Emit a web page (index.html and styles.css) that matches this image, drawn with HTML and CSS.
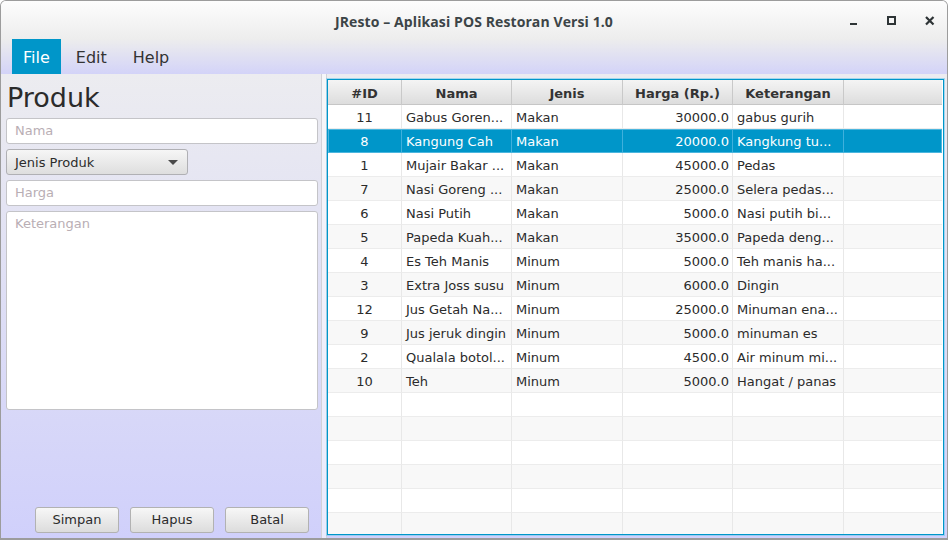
FILE: index.html
```html
<!DOCTYPE html>
<html>
<head>
<meta charset="utf-8">
<title>JResto</title>
<link rel="stylesheet" href="styles.css">
</head>
<body>
<div class="window">
  <div class="titlebar">
    <div class="title">JResto – Aplikasi POS Restoran Versi 1.0</div>
    <div class="controls">
      <svg class="ctl" width="12" height="12" viewBox="0 0 12 12"><rect x="2" y="8" width="7" height="2" fill="#2e3436"/></svg>
      <svg class="ctl" width="12" height="12" viewBox="0 0 12 12"><rect x="2" y="2" width="7" height="7" fill="none" stroke="#2e3436" stroke-width="2"/></svg>
      <svg class="ctl" width="12" height="12" viewBox="0 0 12 12"><path d="M2 2 L9.5 9.5 M9.5 2 L2 9.5" stroke="#2e3436" stroke-width="2.2"/></svg>
    </div>
  </div>
  <div class="menubar">
    <div class="menu active">File</div>
    <div class="menu">Edit</div>
    <div class="menu">Help</div>
  </div>
  <div class="main">
    <div class="left">
      <div class="heading">Produk</div>
      <div class="field"><span class="ph">Nama</span></div>
      <div class="combo"><span>Jenis Produk</span><span class="arrow"></span></div>
      <div class="field"><span class="ph">Harga</span></div>
      <div class="area"><span class="ph">Keterangan</span></div>
      <div class="spacer"></div>
      <div class="buttons">
        <div class="btn">Simpan</div>
        <div class="btn">Hapus</div>
        <div class="btn">Batal</div>
      </div>
    </div>
    <div class="divider"></div>
    <div class="right">
      <div class="tablebox">
        <table class="grid">
          <colgroup>
            <col class="c-id"><col class="c-nama"><col class="c-jenis"><col class="c-harga"><col class="c-ket"><col>
          </colgroup>
          <thead>
            <tr><th>#ID</th><th>Nama</th><th>Jenis</th><th>Harga (Rp.)</th><th>Keterangan</th><th class="fill"></th></tr>
          </thead>
          <tbody>
            <tr><td class="ctr">11</td><td>Gabus Goren...</td><td>Makan</td><td class="num">30000.0</td><td>gabus gurih</td><td></td></tr>
            <tr class="sel"><td class="ctr">8</td><td>Kangung Cah</td><td>Makan</td><td class="num">20000.0</td><td>Kangkung tu...</td><td></td></tr>
            <tr><td class="ctr">1</td><td>Mujair Bakar ...</td><td>Makan</td><td class="num">45000.0</td><td>Pedas</td><td></td></tr>
            <tr><td class="ctr">7</td><td>Nasi Goreng ...</td><td>Makan</td><td class="num">25000.0</td><td>Selera pedas...</td><td></td></tr>
            <tr><td class="ctr">6</td><td>Nasi Putih</td><td>Makan</td><td class="num">5000.0</td><td>Nasi putih bi...</td><td></td></tr>
            <tr><td class="ctr">5</td><td>Papeda Kuah...</td><td>Makan</td><td class="num">35000.0</td><td>Papeda deng...</td><td></td></tr>
            <tr><td class="ctr">4</td><td>Es Teh Manis</td><td>Minum</td><td class="num">5000.0</td><td>Teh manis ha...</td><td></td></tr>
            <tr><td class="ctr">3</td><td>Extra Joss susu</td><td>Minum</td><td class="num">6000.0</td><td>Dingin</td><td></td></tr>
            <tr><td class="ctr">12</td><td>Jus Getah Na...</td><td>Minum</td><td class="num">25000.0</td><td>Minuman ena...</td><td></td></tr>
            <tr><td class="ctr">9</td><td>Jus jeruk dingin</td><td>Minum</td><td class="num">5000.0</td><td>minuman es</td><td></td></tr>
            <tr><td class="ctr">2</td><td>Qualala botol...</td><td>Minum</td><td class="num">4500.0</td><td>Air minum mi...</td><td></td></tr>
            <tr><td class="ctr">10</td><td>Teh</td><td>Minum</td><td class="num">5000.0</td><td>Hangat / panas</td><td></td></tr>
            <tr><td></td><td></td><td></td><td></td><td></td><td></td></tr>
            <tr><td></td><td></td><td></td><td></td><td></td><td></td></tr>
            <tr><td></td><td></td><td></td><td></td><td></td><td></td></tr>
            <tr><td></td><td></td><td></td><td></td><td></td><td></td></tr>
            <tr><td></td><td></td><td></td><td></td><td></td><td></td></tr>
            <tr><td></td><td></td><td></td><td></td><td></td><td></td></tr>
          </tbody>
        </table>
      </div>
    </div>
  </div>
</div>
</body>
</html>
```

FILE: styles.css
```css
* { box-sizing: border-box; }
html, body { margin: 0; padding: 0; background: #ffffff; }
body { width: 949px; height: 540px; overflow: hidden; font-family: "DejaVu Sans", sans-serif; color: #2b2b2b; }

.window {
  width: 948px;
  height: 540px;
  border: 1px solid #9c9c9c;
  border-bottom-width: 2px;
  border-radius: 6px 6px 0 0;
  display: flex;
  flex-direction: column;
  overflow: hidden;
  background: #ececf0;
}

.titlebar {
  height: 38px;
  flex: none;
  background: linear-gradient(#fdfdfd, #ededed);
  display: flex;
  align-items: center;
  justify-content: center;
  position: relative;
}
.title {
  font-family: "Open Sans", "Noto Sans", sans-serif;
  font-weight: 700;
  font-size: 14px;
  color: #3c4447;
  letter-spacing: 0.1px;
  padding-top: 2px;
}
.controls {
  position: absolute;
  right: 11px;
  top: 14px;
  display: flex;
  gap: 26px;
}
.ctl { display: block; }

.menubar {
  height: 35px;
  flex: none;
  background: linear-gradient(#ededed, #d3d3f8);
  display: flex;
  padding-left: 11px;
  gap: 3px;
}
.menu {
  padding: 2px 11px 0;
  font-size: 16px;
  line-height: 33px;
  color: #333;
}
.menu.active { background: #0096c9; color: #ffffff; }
.menu + .menu { margin-left: 1px; }

.main {
  flex: 1;
  display: flex;
  background: linear-gradient(#ececf0, #d0d0fb);
  min-height: 0;
}

.left {
  width: 320px;
  flex: none;
  display: flex;
  flex-direction: column;
  padding: 8px 3px 5px 5px;
}
.heading {
  font-size: 27px;
  line-height: 32px;
  height: 32px;
  color: #2b2b2b;
  padding-left: 1px;
  margin-bottom: 4px;
}
.field, .area {
  height: 26px;
  background: #ffffff;
  border: 1px solid #c4c4c8;
  border-radius: 3px;
  padding: 0 8px;
  font-size: 13px;
  line-height: 24px;
  margin-bottom: 5px;
}
.area { height: 199px; line-height: 24px; }
.ph { color: #b9aeb4; }
.combo {
  width: 182px;
  height: 26px;
  border: 1px solid #b0b0b4;
  border-radius: 3px;
  background: linear-gradient(#f6f6f6, #dedede);
  display: flex;
  align-items: center;
  justify-content: space-between;
  padding: 0 9px 0 8px;
  font-size: 13px;
  color: #2b2b2b;
  margin-bottom: 5px;
}
.arrow {
  width: 0; height: 0;
  border-left: 5px solid transparent;
  border-right: 5px solid transparent;
  border-top: 5px solid #4a4a4a;
}
.spacer { flex: 1; }
.buttons {
  display: flex;
  justify-content: flex-end;
  gap: 11px;
  padding-right: 9px;
}
.btn {
  width: 84px;
  height: 26px;
  border: 1px solid #b2b2b2;
  border-radius: 3px;
  background: linear-gradient(#f7f7f7, #dcdcdc);
  font-size: 13px;
  line-height: 24px;
  text-align: center;
  color: #2b2b2b;
}

.divider {
  width: 6px;
  flex: none;
  border-left: 1px solid #d2d2d8;
  border-right: 1px solid #d2d2d8;
  background: rgba(255,255,255,0.55);
}

.right {
  flex: 1;
  padding: 5px 3px 3px 0;
  display: flex;
  min-width: 0;
}
.tablebox {
  flex: 1;
  border: 1px solid #0096c9;
  box-shadow: 0 0 0 1px rgba(120, 200, 235, 0.6);
  background: #ffffff;
  overflow: hidden;
}
.grid {
  width: 614px;
  border-collapse: separate;
  border-spacing: 0;
  table-layout: fixed;
  font-size: 13px;
}
.c-id { width: 74px; }
.c-nama { width: 110px; }
.c-jenis { width: 111px; }
.c-harga { width: 110px; }
.c-ket { width: 111px; }

.grid th {
  height: 25px;
  padding: 2px 3px 0;
  font-weight: 700;
  color: #333;
  background: linear-gradient(#f4f4f4, #dddddd);
  border-right: 1px solid #c9c9c9;
  border-bottom: 1px solid #c6c6c6;
  text-align: center;
  white-space: nowrap;
  overflow: hidden;
}
.grid th.fill { border-right: none; }
.grid td {
  height: 24px;
  padding: 1px 4px 0 4px;
  border-right: 1px solid #e8e8e8;
  border-bottom: 1px solid #ececec;
  white-space: nowrap;
  overflow: hidden;
  color: #2b2b2b;
}
.grid td:last-child { border-right: none; }
.grid tbody tr:nth-child(even) td { background: #f8f8f8; }
.grid td.ctr { text-align: center; padding: 1px 0 0; }
.grid td.num { text-align: right; padding-right: 3px; }
.grid tbody tr.sel td {
  background: #0096c9;
  color: #ffffff;
  border-right-color: #3fb0dc;
  border-bottom-color: #4cb6de;
}
.grid tr.sel { outline: 1px solid #4cb6de; outline-offset: -1px; }
```
